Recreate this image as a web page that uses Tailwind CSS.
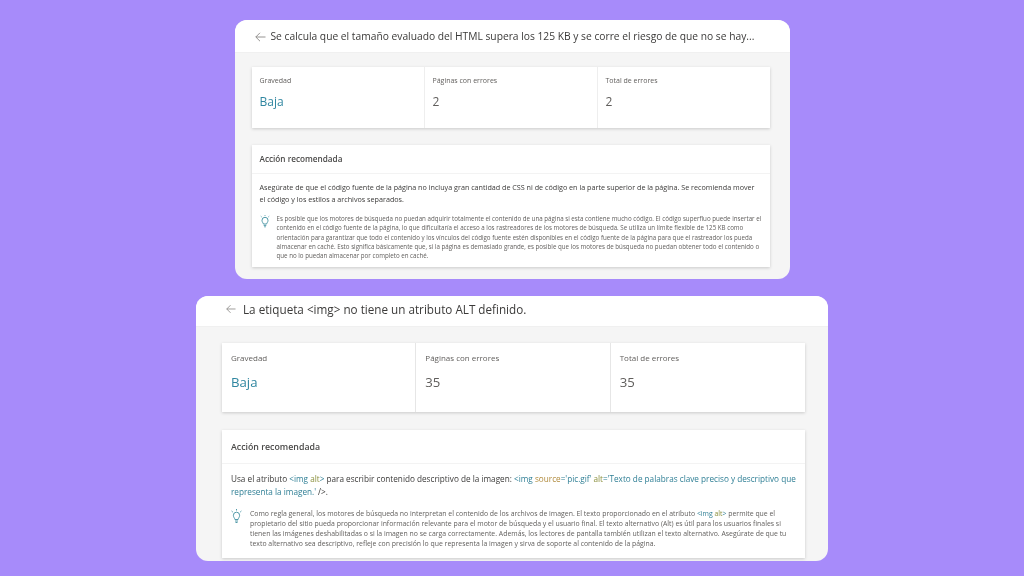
<!DOCTYPE html>
<html lang="es">
<head>
<meta charset="utf-8">
<script src="https://cdn.jsdelivr.net/npm/@tailwindcss/browser@4"></script>
</head>
<body class="m-0">
<main class="w-[1024px] h-[576px] overflow-hidden bg-[#a78bfa] flex flex-col items-center pt-[20px] gap-[17px] font-['Open_Sans','Noto_Sans',sans-serif] text-[#3b3a39]">

  <section class="w-[555px] h-[259px] rounded-[12px] bg-[#f5f5f5] overflow-hidden flex flex-col blur-[0.4px]">
    <header class="h-[33px] shrink-0 bg-white flex items-center pt-[1px] pl-[20px] gap-[5px] border-b border-[#f0f0f0]">
      <svg class="w-[11px] h-[10px] shrink-0" viewBox="0 0 11 10" fill="none" stroke="#8a8886" stroke-width="0.9"><path d="M10.5 5H.8M5 .8.8 5 5 9.2"/></svg>
      <h1 class="text-[10.26px] font-normal whitespace-nowrap">Se calcula que el tamaño evaluado del HTML supera los 125 KB y se corre el riesgo de que no se hay...</h1>
    </header>
    <div class="flex flex-col px-[17px] pt-[14px] gap-[17px]">
      <div class="w-[518px] h-[61px] bg-white shadow-[0_1px_3px_rgba(0,0,0,0.18)] grid grid-cols-[173px_173px_1fr]">
        <div class="pl-[8px] pt-[9px] border-r border-[#eeeeee]">
          <p class="text-[7px] leading-[10px] text-[#605e5c]">Gravedad</p>
          <p class="text-[12px] leading-[16px] mt-[8px] text-[#2f86a0]">Baja</p>
        </div>
        <div class="pl-[8px] pt-[9px] border-r border-[#eeeeee]">
          <p class="text-[7px] leading-[10px] text-[#605e5c]">Páginas con errores</p>
          <p class="text-[12px] leading-[16px] mt-[8px] text-[#605e5c]">2</p>
        </div>
        <div class="pl-[8px] pt-[9px]">
          <p class="text-[7px] leading-[10px] text-[#605e5c]">Total de errores</p>
          <p class="text-[12px] leading-[16px] mt-[8px] text-[#605e5c]">2</p>
        </div>
      </div>
      <div class="w-[518px] h-[122px] bg-white shadow-[0_1px_3px_rgba(0,0,0,0.18)]">
        <h2 class="h-[29px] flex items-center pl-[8px] text-[8.2px] font-semibold text-[#4a4948] border-b border-[#f3f3f3]">Acción recomendada</h2>
        <p class="mx-[8px] mt-[7px] text-[7.2px] leading-[12px]">Asegúrate de que el código fuente de la página no incluya gran cantidad de CSS ni de código en la parte superior de la página. Se recomienda mover el código y los estilos a archivos separados.</p>
        <div class="flex mt-[9px] pl-[8px] pr-[6px] gap-[7px]">
          <svg class="w-[10px] h-[13px] shrink-0 mt-[1px]" viewBox="0 0 10 13" fill="none" stroke="#3f8f9f" stroke-width="0.9"><path d="M5 0v.8M.8 1.2l.8.7M9.2 1.2l-.8.7M3.4 9C3.2 7.8 2 7.2 2 5.3a3 3 0 0 1 6 0c0 1.9-1.2 2.5-1.4 3.7ZM3.7 10.4h2.6M4.2 11.8h1.6"/></svg>
          <p class="text-[6.2px] leading-[9.3px] text-[#605e5c]">Es posible que los motores de búsqueda no puedan adquirir totalmente el contenido de una página si esta contiene mucho código. El código superfluo puede insertar el contenido en el código fuente de la página, lo que dificultaría el acceso a los rastreadores de los motores de búsqueda. Se utiliza un límite flexible de 125 KB como orientación para garantizar que todo el contenido y los vínculos del código fuente estén disponibles en el código fuente de la página para que el rastreador los pueda almacenar en caché. Esto significa básicamente que, si la página es demasiado grande, es posible que los motores de búsqueda no puedan obtener todo el contenido o que no lo puedan almacenar por completo en caché.</p>
        </div>
      </div>
    </div>
  </section>

  <section class="w-[632px] h-[265px] rounded-[12px] bg-[#f5f5f5] overflow-hidden flex flex-col blur-[0.4px]">
    <header class="h-[31px] shrink-0 bg-white flex items-start pt-[5px] pl-[30px] gap-[7px] border-b border-[#f0f0f0]">
      <svg class="w-[10px] h-[10px] mt-[3px] shrink-0" viewBox="0 0 11 10" fill="none" stroke="#8a8886" stroke-width="0.9"><path d="M10.5 5H.8M5 .8.8 5 5 9.2"/></svg>
      <h1 class="text-[11.7px] font-normal whitespace-nowrap">La etiqueta &lt;img&gt; no tiene un atributo ALT definido.</h1>
    </header>
    <div class="flex flex-col pl-[26px] pt-[16px] gap-[18px]">
      <div class="w-[583px] h-[69px] bg-white shadow-[0_1px_3px_rgba(0,0,0,0.18)] grid grid-cols-3">
        <div class="pl-[9px] pt-[9px] border-r border-[#e6e6e6]">
          <p class="text-[8px] leading-[12px] text-[#605e5c]">Gravedad</p>
          <p class="text-[13.2px] leading-[18px] mt-[9px] text-[#2f86a0]">Baja</p>
        </div>
        <div class="pl-[9px] pt-[9px] border-r border-[#e6e6e6]">
          <p class="text-[8px] leading-[12px] text-[#605e5c]">Páginas con errores</p>
          <p class="text-[13.2px] leading-[18px] mt-[9px] text-[#605e5c]">35</p>
        </div>
        <div class="pl-[9px] pt-[9px]">
          <p class="text-[8px] leading-[12px] text-[#605e5c]">Total de errores</p>
          <p class="text-[13.2px] leading-[18px] mt-[9px] text-[#605e5c]">35</p>
        </div>
      </div>
      <div class="w-[583px] h-[128px] bg-white shadow-[0_1px_3px_rgba(0,0,0,0.18)]">
        <h2 class="h-[34px] flex items-center pt-[2px] pl-[9px] text-[8.8px] font-semibold text-[#4a4948] border-b border-[#f3f3f3]">Acción recomendada</h2>
        <p class="mx-[9px] mt-[9px] text-[8.2px] leading-[12.5px]">Usa el atributo <span class="text-[#2f7f95]">&lt;img</span> <span class="text-[#8a8f3c]">alt</span><span class="text-[#2f7f95]">&gt;</span> para escribir contenido descriptivo de la imagen: <span class="text-[#2f7f95]">&lt;img</span> <span class="text-[#b08a3c]">source</span><span class="text-[#2f7f95]">='pic.gif'</span> <span class="text-[#8a8f3c]">alt</span><span class="text-[#2f7f95]">='Texto de palabras clave preciso y descriptivo que</span> <span class="text-[#2f7f95]">representa la imagen.'</span> /&gt;.</p>
        <div class="flex mt-[11px] pl-[9px] pr-[9px] gap-[8px]">
          <svg class="w-[11px] h-[15px] shrink-0" viewBox="0 0 11 15" fill="none" stroke="#3f8f9f" stroke-width="0.9"><path d="M5.5 0v1.5M.6 2 1.8 3.1M10.4 2 9.2 3.1M3.9 10.5C3.7 9 2.4 8.3 2.4 6.3a3.1 3.1 0 0 1 6.2 0c0 2-1.3 2.7-1.5 4.2ZM4 12h3M4.5 13.5h2"/></svg>
          <p class="text-[6.9px] leading-[10.1px] text-[#605e5c]">Como regla general, los motores de búsqueda no interpretan el contenido de los archivos de imagen. El texto proporcionado en el atributo <span class="text-[#2f7f95]">&lt;img</span> <span class="text-[#8a8f3c]">alt</span><span class="text-[#2f7f95]">&gt;</span> permite que el propietario del sitio pueda proporcionar información relevante para el motor de búsqueda y el usuario final. El texto alternativo (Alt) es útil para los usuarios finales si tienen las imágenes deshabilitadas o si la imagen no se carga correctamente. Además, los lectores de pantalla también utilizan el texto alternativo. Asegúrate de que tu texto alternativo sea descriptivo, refleje con precisión lo que representa la imagen y sirva de soporte al contenido de la página.</p>
        </div>
      </div>
    </div>
  </section>
</main>
</body>
</html>
